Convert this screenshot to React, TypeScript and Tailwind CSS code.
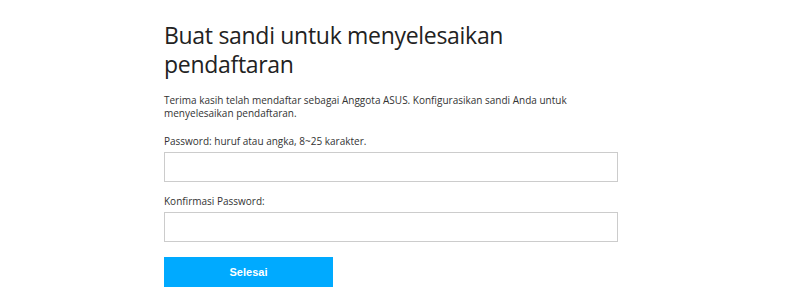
export default function App() {
  return (
    <div className="w-[792px] h-[303px] bg-white font-['Open_Sans','Noto_Sans',sans-serif] text-[#333]">
      <div className="ml-[164px] w-[454px] pt-[21px]">
        <h1 className="text-[23px] leading-[29px] font-normal text-[#222] tracking-[-0.3px]">
          Buat sandi untuk menyelesaikan pendaftaran
        </h1>

        <p className="mt-[15px] text-[10px] leading-[13px] w-[420px]">
          Terima kasih telah mendaftar sebagai Anggota ASUS. Konfigurasikan sandi Anda untuk menyelesaikan pendaftaran.
        </p>

        <label className="block mt-[15px] text-[10px] leading-[13px]">
          Password: huruf atau angka, 8~25 karakter.
        </label>
        <input
          type="password"
          className="block mt-[4px] w-[454px] h-[30px] border border-[#cccccc] outline-none"
        />

        <label className="block mt-[13px] text-[10px] leading-[13px]">
          Konfirmasi Password:
        </label>
        <input
          type="password"
          className="block mt-[4px] w-[454px] h-[30px] border border-[#cccccc] outline-none"
        />

        <button className="mt-[15px] w-[169px] h-[30px] bg-[#00aaff] text-white text-[11px] font-bold font-['Liberation_Sans',sans-serif]">
          Selesai
        </button>
      </div>
    </div>
  );
}
